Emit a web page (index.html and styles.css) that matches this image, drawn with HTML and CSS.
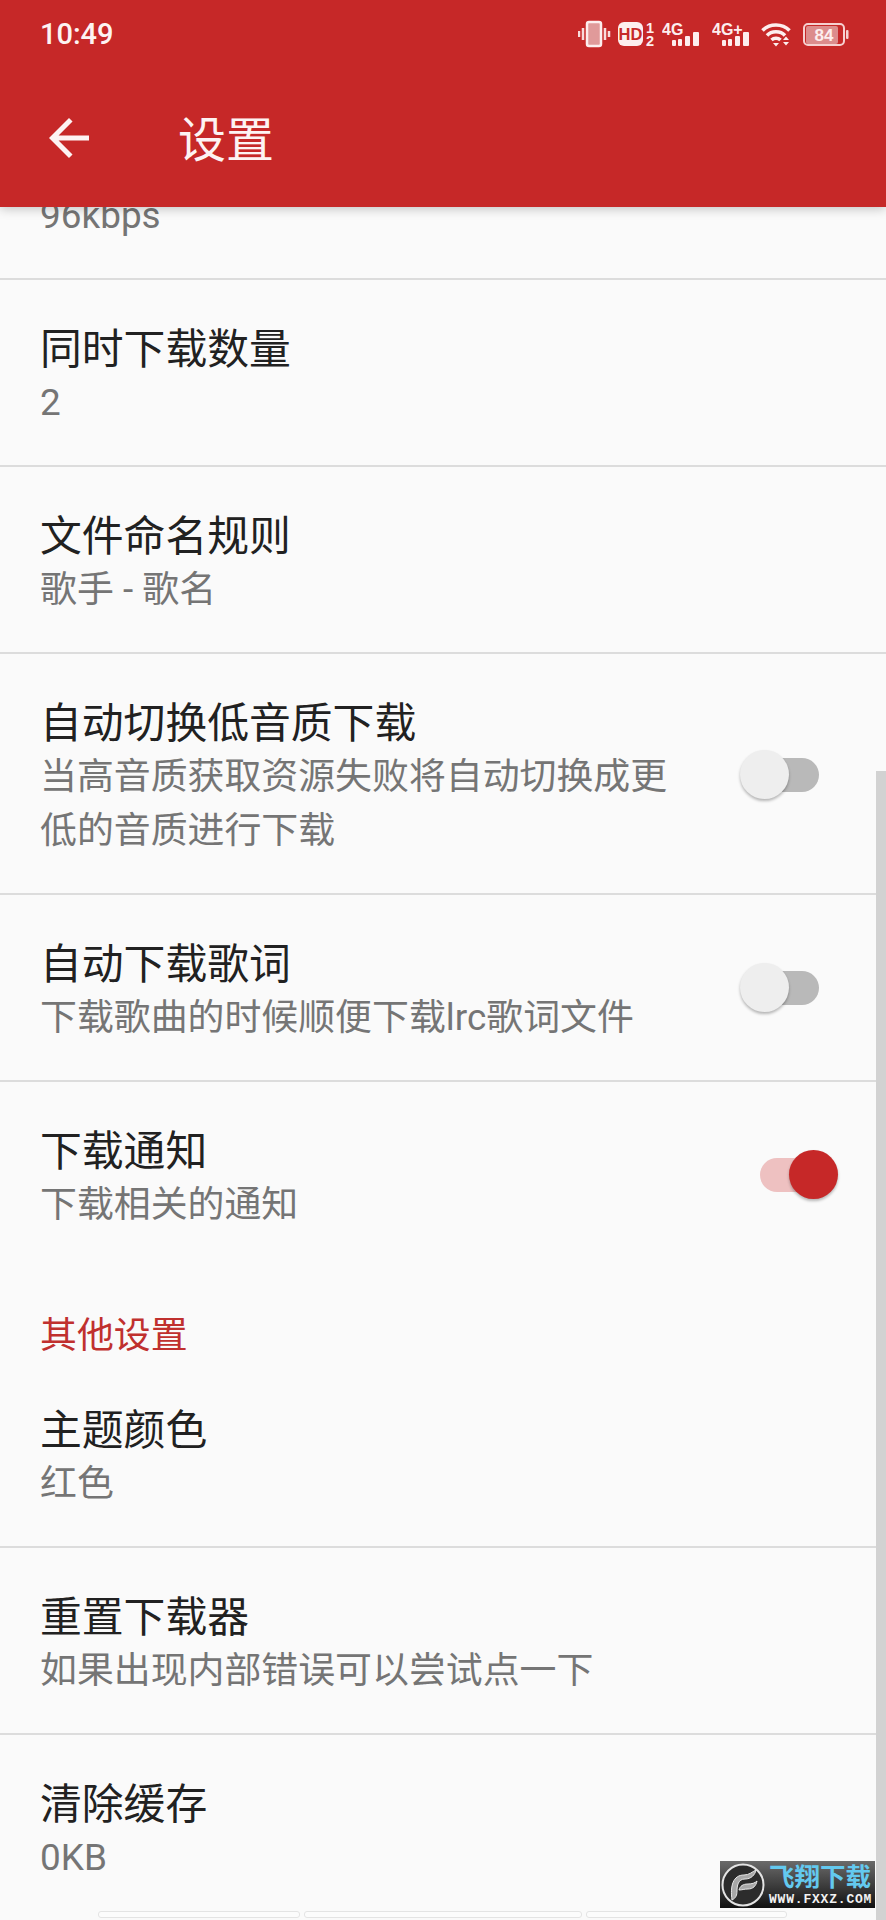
FILE: index.html
```html
<!DOCTYPE html>
<html lang="zh-CN">
<head>
    <meta charset="UTF-8">
    <meta name="viewport" content="width=device-width, initial-scale=1.0">
    <title>设置</title>
    <link rel="stylesheet" href="styles.css">
</head>
<body>
    <header class="app-header">
        <div class="status-bar">
            <span class="status-time">10:49</span>
            <div class="status-icons">
                <svg class="icon-vibrate" viewBox="0 0 40 30">
                    <rect class="phone" x="9" y="3" width="14" height="24" rx="2"/>
                    <path class="tick" d="M5 9v12M1 12v6M27 9v12M31 12v6"/>
                </svg>
                <svg class="icon-hd" viewBox="0 0 44 30">
                    <rect class="hd-box" x="0" y="3" width="25" height="24" rx="6"/>
                    <text class="hd-text" x="12.5" y="21">HD</text>
                    <text class="sim-text" x="32" y="13.500">1</text>
                    <text class="sim-text" x="32" y="27">2</text>
                </svg>
                <svg class="icon-signal" viewBox="0 0 50 30">
                    <text class="net-text" x="0" y="15.500">4G</text>
                    <rect class="bar" x="10" y="21" width="4" height="6" rx="1"/>
                    <rect class="bar" x="16" y="20" width="4" height="7" rx="1"/>
                    <rect class="bar" x="23" y="17" width="5" height="10" rx="1"/>
                    <rect class="bar" x="31" y="13" width="6" height="14" rx="1"/>
                </svg>
                <svg class="icon-signal-plus" viewBox="0 0 49 30">
                    <text class="net-text" x="0" y="15.500">4G+</text>
                    <rect class="bar" x="10" y="21" width="4" height="6" rx="1"/>
                    <rect class="bar" x="16" y="20" width="4" height="7" rx="1"/>
                    <rect class="bar" x="23" y="17" width="5" height="10" rx="1"/>
                    <rect class="bar" x="31" y="13" width="6" height="14" rx="1"/>
                </svg>
                <svg class="icon-wifi" viewBox="0 0 42 30">
                    <path class="wifi-arc" d="M1.5 11.5C8.500 4 21.500 4 28.500 11.500"/>
                    <path class="wifi-arc" d="M6 16.500C10.500 11.500 19.500 11.500 24 16.500"/>
                    <path class="wifi-arc" d="M10.500 21C13 18.500 17 18.500 19.500 21"/>
                    <path class="wifi-dot" d="M12 24h6l-3 3.500zM22 21l3-3.500 3 3.500zM22 23h6l-3 3.500z"/>
                </svg>
                <svg class="icon-battery" viewBox="0 0 46 30">
                    <rect class="bat-level" x="3" y="7" width="32" height="18" rx="2"/>
                    <rect class="bat-shell" x="1" y="5" width="40" height="21" rx="4"/>
                    <rect class="bat-cap" x="43" y="11" width="2.500" height="9" rx="1"/>
                    <text class="bat-text" x="21" y="22">84</text>
                </svg>
            </div>
        </div>
        <div class="toolbar">
            <svg class="back-icon" viewBox="0 0 24 24">
                <path d="M20 11H7.830l5.590-5.590L12 4l-8 8 8 8 1.410-1.410L7.830 13H20v-2z"/>
            </svg>
            <h1 class="toolbar-title">设置</h1>
        </div>
    </header>

    <main class="settings">
        <div class="pref pref-cut">
            <div class="pref-text">
                <p class="pref-summary">96kbps</p>
            </div>
        </div>
        <div class="pref">
            <div class="pref-text">
                <p class="pref-title">同时下载数量</p>
                <p class="pref-summary">2</p>
            </div>
        </div>
        <div class="pref">
            <div class="pref-text">
                <p class="pref-title">文件命名规则</p>
                <p class="pref-summary">歌手 - 歌名</p>
            </div>
        </div>
        <div class="pref">
            <div class="pref-text">
                <p class="pref-title">自动切换低音质下载</p>
                <p class="pref-summary">当高音质获取资源失败将自动切换成更低的音质进行下载</p>
            </div>
            <div class="switch"><span class="switch-track"></span><span class="switch-thumb"></span></div>
        </div>
        <div class="pref">
            <div class="pref-text">
                <p class="pref-title">自动下载歌词</p>
                <p class="pref-summary">下载歌曲的时候顺便下载lrc歌词文件</p>
            </div>
            <div class="switch"><span class="switch-track"></span><span class="switch-thumb"></span></div>
        </div>
        <div class="pref pref-last">
            <div class="pref-text">
                <p class="pref-title">下载通知</p>
                <p class="pref-summary">下载相关的通知</p>
            </div>
            <div class="switch switch-on"><span class="switch-track"></span><span class="switch-thumb"></span></div>
        </div>

        <h2 class="section-title">其他设置</h2>
        <div class="pref">
            <div class="pref-text">
                <p class="pref-title">主题颜色</p>
                <p class="pref-summary">红色</p>
            </div>
        </div>
        <div class="pref">
            <div class="pref-text">
                <p class="pref-title">重置下载器</p>
                <p class="pref-summary">如果出现内部错误可以尝试点一下</p>
            </div>
        </div>
        <div class="pref pref-last">
            <div class="pref-text">
                <p class="pref-title">清除缓存</p>
                <p class="pref-summary">0KB</p>
            </div>
        </div>
    </main>

    <div class="scrollbar"></div>

    <div class="bottom-tabs">
        <span class="tab-a"></span>
        <span class="tab-b"></span>
        <span class="tab-c"></span>
    </div>

    <div class="watermark">
        <svg class="wm-logo" viewBox="0 0 46 46">
            <circle class="wm-ring" cx="23" cy="23" r="20.500"/>
            <path class="wm-swoosh" d="M12 38C10 24 13 13 24 13c5 0 8-3 12-5-1 5-5 9-11 9-7 0-8 7-8 12 0 4-1 7-5 9z"/>
            <path class="wm-swoosh" d="M19 28c1-4 4-6 9-6 4 0 7-1 9-3-1 5-4 8-9 8-4 0-6 1-9 1z"/>
        </svg>
        <div class="wm-text">
            <span class="wm-name">飞翔下载</span>
            <span class="wm-url">WWW.FXXZ.COM</span>
        </div>
    </div>
</body>
</html>
```

FILE: styles.css
```css
:root {
    --red: #c62828;
    --bg: #fafafa;
    --line: #dcdcdc;
    --text-main: #212121;
    --text-sub: #757575;
}

* {
    margin: 0;
    padding: 0;
    box-sizing: border-box;
}

html, body {
    height: 1920px;
    overflow: hidden;
}

body {
    position: relative;
    background: var(--bg);
    font-family: Roboto, "Noto Sans CJK SC", sans-serif;
    color: var(--text-main);
}

/* header */

.app-header {
    position: relative;
    z-index: 2;
    height: 207px;
    background: var(--red);
    box-shadow: 0 2px 10px rgba(0, 0, 0, 0.22);
    color: #fdf3f3;
}

.status-bar {
    display: flex;
    justify-content: space-between;
    align-items: center;
    height: 68px;
    padding: 0 37px 0 40px;
}

.status-time {
    font-size: 29px;
    font-weight: 500;
}

.status-icons {
    display: flex;
    align-items: center;
}

.status-icons svg {
    height: 30px;
    display: block;
    fill: #fdeeee;
}

.icon-vibrate { width: 40px; }
.icon-hd { width: 44px; }
.icon-signal { width: 50px; }
.icon-signal-plus { width: 49px; }
.icon-wifi { width: 42px; }
.icon-battery { width: 46px; }

.phone {
    fill: #e09a9a;
    stroke: #fdeeee;
    stroke-width: 2.5;
}

.tick {
    fill: none;
    stroke: #f8dcdc;
    stroke-width: 2.5;
}

.hd-text {
    font: 700 16.500px "Liberation Sans", sans-serif;
    fill: var(--red);
    text-anchor: middle;
}

.sim-text {
    font: 700 14.500px "Liberation Sans", sans-serif;
    text-anchor: middle;
}

.net-text {
    font: 700 16px "Liberation Sans", sans-serif;
}

.wifi-arc {
    fill: none;
    stroke: #fdeeee;
    stroke-width: 3.500;
}

.bat-shell {
    fill: none;
    stroke: #f6d0d0;
    stroke-width: 2;
}

.status-icons .bat-level {
    fill: #dc8c8c;
}

.status-icons .bat-cap {
    fill: #f6d0d0;
}

.bat-text {
    font: 700 17px "Liberation Sans", sans-serif;
    text-anchor: middle;
}

.toolbar {
    display: flex;
    align-items: center;
    height: 139px;
    padding-left: 39px;
}

.back-icon {
    width: 60px;
    height: 60px;
    fill: #fdf3f3;
}

.toolbar-title {
    margin: -4px 0 0 79px;
    font-size: 48px;
    font-weight: 400;
}

/* list */

.pref {
    display: flex;
    align-items: center;
    padding: 44px 48px 35.500px 40px;
    border-bottom: 2px solid var(--line);
}

.pref-last {
    border-bottom: none;
    padding-bottom: 37.500px;
}

.pref-cut {
    height: 73px;
    padding-top: 0;
    padding-bottom: 35.500px;
    align-items: flex-end;
}

.pref-text {
    flex: 1;
    max-width: 640px;
    margin-right: auto;
}

.pref-title {
    font-size: 41.800px;
    line-height: 52px;
}

.pref-summary {
    font-size: 36.900px;
    line-height: 53.500px;
    color: var(--text-sub);
}

.section-title {
    height: 92.500px;
    padding: 40px 0 0 40px;
    font-size: 36.900px;
    line-height: 54px;
    font-weight: 400;
    color: #c0302e;
}

/* switches */

.switch {
    position: relative;
    flex: none;
    width: 98px;
    height: 50px;
    margin-top: -6px;
}

.switch-track {
    position: absolute;
    left: 20px;
    top: 8px;
    width: 59px;
    height: 34px;
    border-radius: 17px;
    background: #b9b9b9;
}

.switch-thumb {
    position: absolute;
    left: 0;
    top: 0;
    width: 49px;
    height: 49px;
    border-radius: 50%;
    background: #eeeeee;
    box-shadow: 0 2px 3px rgba(0, 0, 0, 0.28);
}

.switch-on .switch-track {
    background: #eec1c1;
}

.switch-on .switch-thumb {
    left: 49px;
    background: var(--red);
}

/* overlays */

.scrollbar {
    position: absolute;
    z-index: 3;
    right: 0;
    top: 771px;
    bottom: 0;
    width: 10px;
    background: #d2d2d2;
}

.bottom-tabs {
    position: absolute;
    left: 98px;
    bottom: 2px;
    display: flex;
    gap: 4px;
    width: 689px;
    height: 7px;
}

.bottom-tabs span {
    border: 1px solid #e4e4e4;
    border-radius: 3px;
    background: #fcfcfc;
}

.tab-a { width: 202px; }
.tab-b { width: 278px; }
.tab-c { width: 201px; }

.watermark {
    position: absolute;
    z-index: 4;
    left: 720px;
    top: 1861px;
    display: flex;
    align-items: center;
    width: 155px;
    height: 47px;
    background: linear-gradient(to bottom, #6a6a6a, #3a3a3a 55%, #111111);
}

.wm-logo {
    flex: none;
    width: 46px;
    height: 46px;
}

.wm-ring {
    fill: #2c2c2c;
    stroke: #e4e4e4;
    stroke-width: 2;
}

.wm-swoosh {
    fill: #a8a8a8;
    stroke: #e8e8e8;
    stroke-width: 1;
}

.wm-text {
    display: flex;
    flex-direction: column;
    margin-left: 3px;
}

.wm-name {
    font: 700 25.500px/30px Roboto, "Noto Sans CJK SC", sans-serif;
    color: #63c9ef;
    white-space: nowrap;
}

.wm-url {
    font: 700 13px/15px "Liberation Mono", monospace;
    letter-spacing: 0.8px;
    color: #f2f2f2;
    white-space: nowrap;
}
```
